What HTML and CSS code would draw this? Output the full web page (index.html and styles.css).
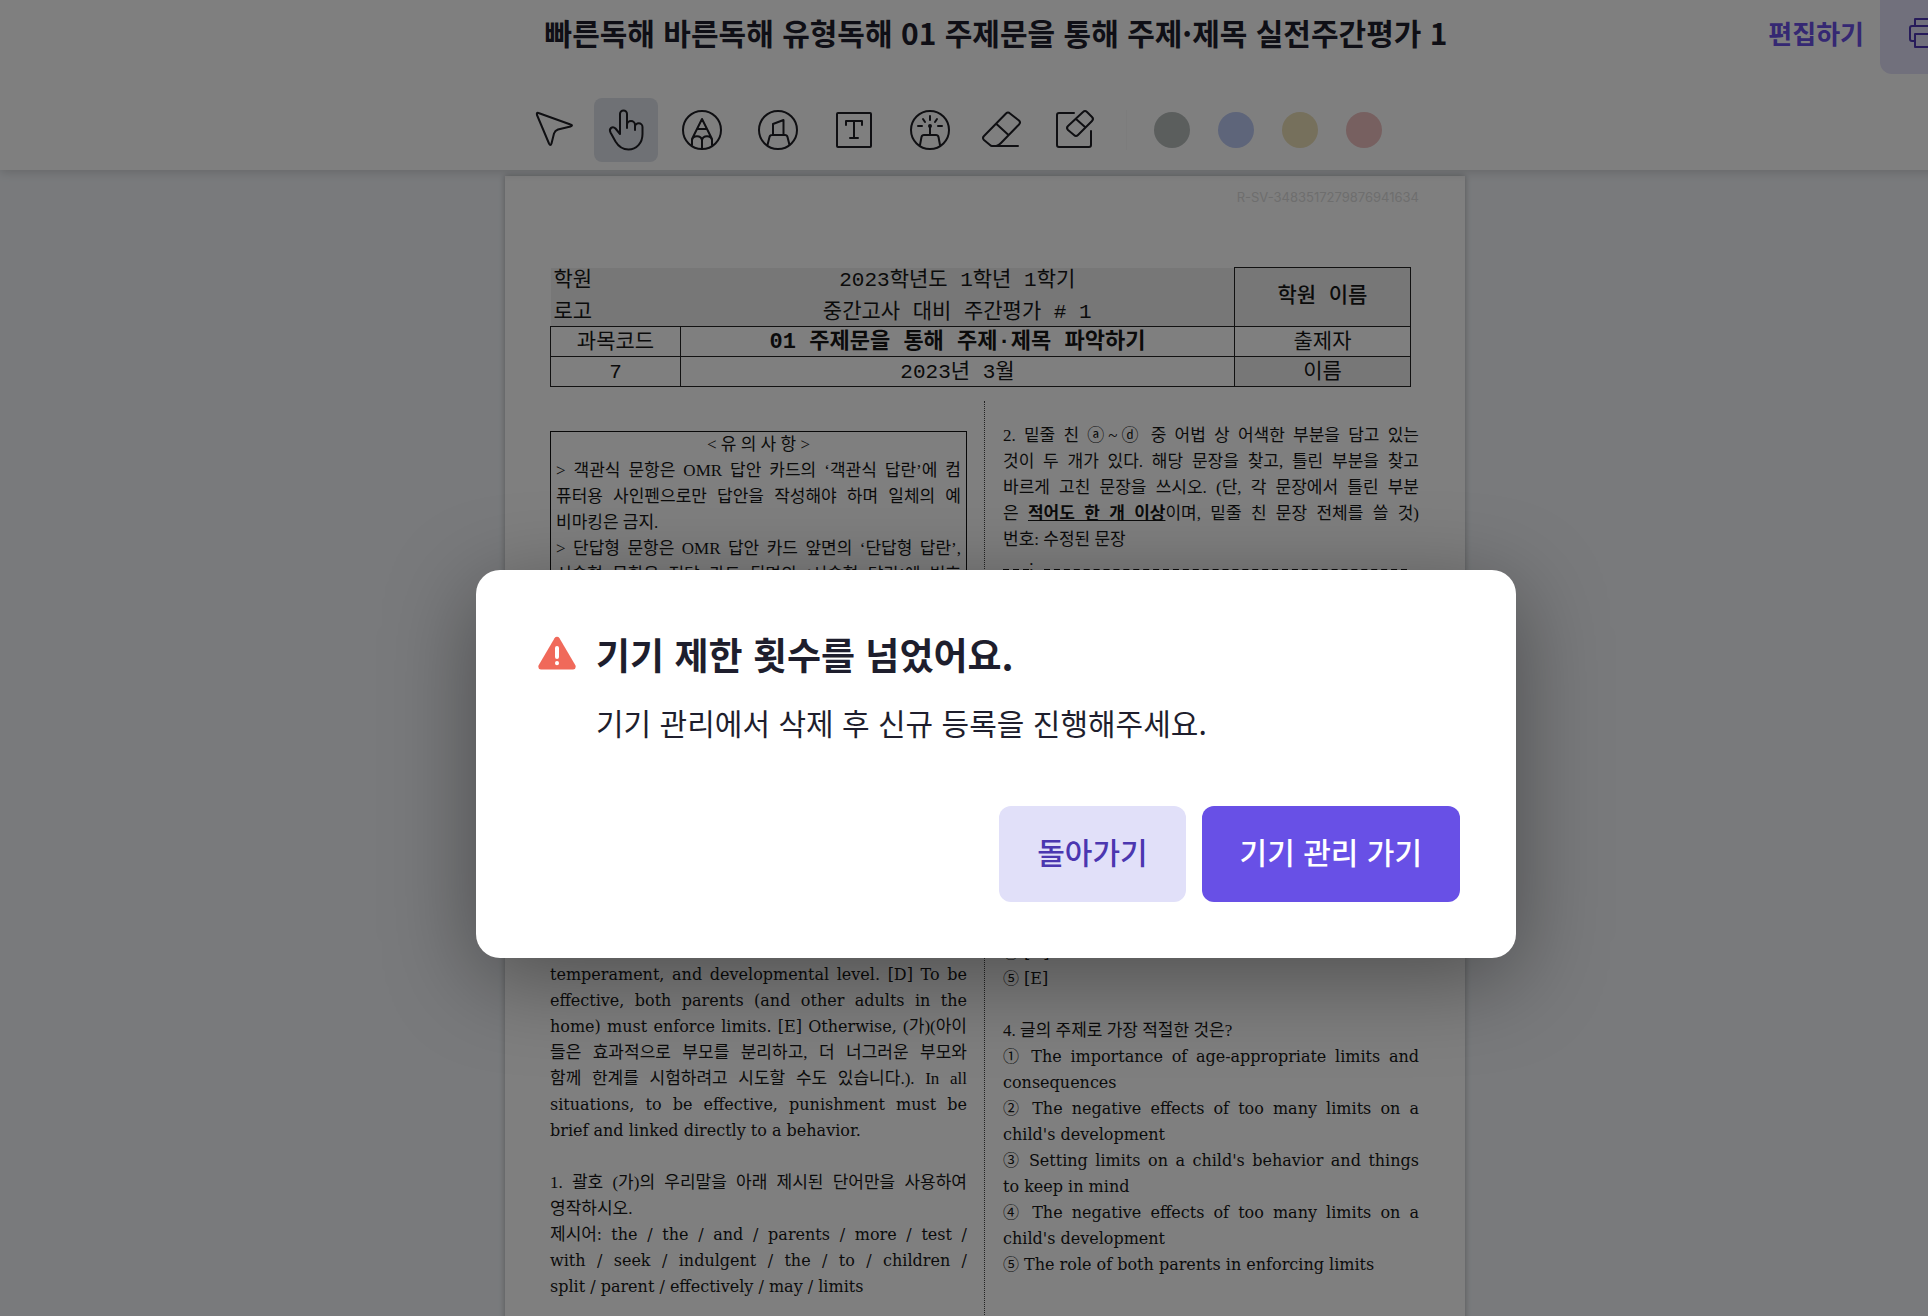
FILE: index.html
```html
<!DOCTYPE html>
<html lang="ko">
<head>
  <meta charset="UTF-8">
  <title>실전주간평가</title>
  <link rel="stylesheet" href="styles.css">
</head>
<body>

  <div class="app">
    <header class="header">
      <div class="title-row">
        <h1>빠른독해 바른독해 유형독해 01 주제문을 통해 주제·제목 실전주간평가 1</h1>
        <div class="actions">
          <a class="edit" href="#">편집하기</a>
          <button class="print" aria-label="인쇄">
            <svg width="32" height="32" viewBox="0 0 32 32">
              <path d="M7 9V2h18v7M7 24H4a2 2 0 0 1-2-2V11a2 2 0 0 1 2-2h24a2 2 0 0 1 2 2v11a2 2 0 0 1-2 2h-3M7 17h18v13H7z"/>
            </svg>
          </button>
        </div>
      </div>

      <div class="toolbar">
        <div class="tools">
          <button class="tool" aria-label="선택">
            <svg viewBox="0 0 64 64"><path d="M20.500 15l32 11.500q3 1 0 2l-12.500 3q-3 1-4 4l-2.500 10q-1 3-2.500 0L19 17q-.8-3 1.500-2z"/></svg>
          </button>
          <button class="tool active" aria-label="이동">
            <svg viewBox="0 0 64 64"><path d="M26 36V16a3.500 3.500 0 0 1 7 0v14-3a4 4 0 0 1 8 0v4-2a3.700 3.700 0 0 1 7.500 0v7c0 9-6 15.500-14 15.500-6 0-10-3-13-8l-5-9c-2-4 2-7 5-4z"/><path d="M41 27v5"/></svg>
          </button>
          <button class="tool" aria-label="연필">
            <svg viewBox="0 0 64 64"><circle cx="32" cy="32" r="19"/><path d="M22 47V41l10-20 10 20v6M27.500 31h9M22 42c1-5 9-5 10 0 1-5 9-5 10 0M32 42v9"/></svg>
          </button>
          <button class="tool" aria-label="형광펜">
            <svg viewBox="0 0 64 64"><circle cx="32" cy="32" r="19"/><path d="M27 37V26l10.500-4v15M21.500 47l2-8q.5-2 2.500-2h13q2 0 2.500 2l2 8"/></svg>
          </button>
          <button class="tool" aria-label="텍스트">
            <svg viewBox="0 0 64 64"><rect x="15" y="15" width="34" height="34" rx="1"/><path d="M24 27v-4h16v4M32 23v17M28 40h8"/></svg>
          </button>
          <button class="tool" aria-label="레이저">
            <svg viewBox="0 0 64 64"><circle cx="32" cy="32" r="19"/><path d="M22 47l1.500-8q.5-2 2.500-2h12q2 0 2.500 2l1.500 8M32 37v-9M32 18v4M25 21l2 3M39 21l-2 3M20 28h4M40 28h4"/><circle class="dot" cx="32" cy="28" r="1"/></svg>
          </button>
          <button class="tool" aria-label="지우개">
            <svg viewBox="0 0 64 64"><path d="M32 15.500q2-2 4 0l9 7q2 2 0 4L27 45q-3 3-5 3h-4q-1 0-2-1l-6-5q-2-2 0-4zM22.500 26l12 11M44 48H18"/></svg>
          </button>
          <button class="tool" aria-label="전체 지우기">
            <svg viewBox="0 0 64 64"><path d="M24 15H9q-2 0-2 2v30q0 2 2 2h30q2 0 2-2V33M33 14q2-2 4 0l5 5q2 2 0 4L28 37q-2 2-4 0l-6-5q-2-2 0-4zM26 21l9 8"/></svg>
          </button>
        </div>
        <div class="divider"></div>
        <div class="swatches">
          <button class="swatch gray" aria-label="회색"></button>
          <button class="swatch blue" aria-label="파랑"></button>
          <button class="swatch yellow" aria-label="노랑"></button>
          <button class="swatch red" aria-label="빨강"></button>
        </div>
      </div>
    </header>

    <main class="canvas">
      <article class="paper">
        <p class="serial">R-SV-3483517279876941634</p>

        <table class="exam-head">
          <colgroup><col class="c1"><col class="c2"><col class="c3"></colgroup>
          <tr class="top">
            <td class="shade left"><span>학원</span><span>로고</span></td>
            <td class="shade"><span>2023학년도 1학년 1학기</span><span>중간고사 대비 주간평가 # 1</span></td>
            <td class="shade school">학원 이름</td>
          </tr>
          <tr>
            <td>과목코드</td>
            <td class="subject">01 주제문을 통해 주제·제목 파악하기</td>
            <td>출제자</td>
          </tr>
          <tr>
            <td>7</td>
            <td>2023년 3월</td>
            <td class="shade">이름</td>
          </tr>
        </table>

        <div class="columns">
          <section class="col">
            <div class="notice">
              <h2>&lt; 유 의 사 항 &gt;</h2>
              <p class="lines">
                <span>&gt; 객관식 문항은 OMR 답안 카드의 ‘객관식 답란’에 컴</span>
                <span>퓨터용 사인펜으로만 답안을 작성해야 하며 일체의 예</span>
                <span>비마킹은 금지.</span>
              </p>
              <p class="lines cut">
                <span>&gt; 단답형 문항은 OMR 답안 카드 앞면의 ‘단답형 답란’,</span>
                <span>서술형 문항은 전답 카드 뒷면의 ‘서술형 답란’에 번호</span>
              </p>
            </div>

            <p class="lines en">
              <span class="end">age,</span>
              <span>temperament, and developmental level. [D] To be</span>
              <span>effective, both parents (and other adults in the</span>
              <span>home) must enforce limits. [E] Otherwise, <b class="ko">(가)(아이</b></span>
              <span class="ko">들은 효과적으로 부모를 분리하고, 더 너그러운 부모와</span>
              <span class="ko">함께 한계를 시험하려고 시도할 수도 있습니다.). In all</span>
              <span>situations, to be effective, punishment must be</span>
              <span>brief and linked directly to a behavior.</span>
            </p>

            <p class="lines next">
              <span>1. 괄호 (가)의 우리말을 아래 제시된 단어만을 사용하여</span>
              <span>영작하시오.</span>
            </p>
            <p class="lines en">
              <span><b class="ko">제시어:</b> the / the / and / parents / more / test /</span>
              <span>with / seek / indulgent / the / to / children /</span>
              <span>split / parent / effectively / may / limits</span>
            </p>
          </section>

          <section class="col right">
            <p class="lines">
              <span>2. 밑줄 친 ⓐ~ⓓ 중 어법 상 어색한 부분을 담고 있는</span>
              <span>것이 두 개가 있다. 해당 문장을 찾고, 틀린 부분을 찾고</span>
              <span>바르게 고친 문장을 쓰시오. (단, 각 문장에서 틀린 부분</span>
              <span>은 <u>적어도 한 개 이상</u>이며, 밑줄 친 문장 전체를 쓸 것)</span>
              <span>번호: 수정된 문장</span>
            </p>
            <div class="answer"><i class="no"></i>:<i class="sentence"></i></div>

            <p class="lines en tail">
              <span class="start">④ [D]</span>
              <span>⑤ [E]</span>
            </p>
            <p class="lines next">
              <span>4. 글의 주제로 가장 적절한 것은?</span>
            </p>
            <p class="lines en">
              <span>① The importance of age-appropriate limits and</span>
              <span>consequences</span>
            </p>
            <p class="lines en">
              <span>② The negative effects of too many limits on a</span>
              <span>child's development</span>
            </p>
            <p class="lines en">
              <span>③ Setting limits on a child's behavior and things</span>
              <span>to keep in mind</span>
            </p>
            <p class="lines en">
              <span>④ The negative effects of too many limits on a</span>
              <span>child's development</span>
            </p>
            <p class="lines en">
              <span>⑤ The role of both parents in enforcing limits</span>
            </p>
          </section>
        </div>
      </article>
    </main>

    <div class="overlay">
      <div class="modal" role="alertdialog" aria-labelledby="modal-title" aria-describedby="modal-text">
        <div class="message">
          <svg class="warning" width="38" height="34" viewBox="0 0 38 34">
            <path d="M16.500 2.200a3 3 0 0 1 5 0l16 27.300a3 3 0 0 1-2.600 4H3.100a3 3 0 0 1-2.600-4z"/>
            <path class="mark" d="M19 12v9M19 27v.2"/>
          </svg>
          <div>
            <h2 id="modal-title">기기 제한 횟수를 넘었어요.</h2>
            <p id="modal-text">기기 관리에서 삭제 후 신규 등록을 진행해주세요.</p>
          </div>
        </div>
        <div class="buttons">
          <button class="btn back">돌아가기</button>
          <button class="btn go">기기 관리 가기</button>
        </div>
      </div>
    </div>
  </div>

</body>
</html>
```

FILE: styles.css
```css
* {
  box-sizing: border-box;
}

body {
  margin: 0;
  height: 100vh;
  overflow: hidden;
  background-color: #f2f5f9;
  color: #1e1e2d;
  font-family: "Noto Sans CJK KR", sans-serif;
}

h1, h2, p {
  margin: 0;
}

button {
  border: none;
  padding: 0;
  font-family: inherit;
}

svg {
  fill: none;
  stroke: #1e1e24;
  stroke-width: 2;
  stroke-linecap: round;
  stroke-linejoin: round;
}

/* the app runs a little past the right edge of the window */
.app {
  position: relative;
  width: calc(100% + 64px);
  height: 100vh;
  overflow: hidden;
}

/* header */
.header {
  position: relative;
  height: 170px;
  background-color: #fff;
  box-shadow: 0 2px 10px rgba(0, 0, 0, 0.16);
}

.title-row {
  display: grid;
  grid-template-columns: 1fr auto 1fr;
  align-items: center;
  height: 66px;
  margin-bottom: 32px;
}

h1 {
  grid-column: 2;
  padding-bottom: 2px;
  font-size: 30px;
  line-height: 40px;
  font-weight: 700;
  white-space: nowrap;
}

.actions {
  display: flex;
  justify-content: flex-end;
  align-items: center;
  align-self: start;
  gap: 16px;
  height: 66px;
}

.edit {
  padding-bottom: 2px;
  color: #6a50e6;
  font-size: 26px;
  font-weight: 700;
  text-decoration: none;
}

.print {
  align-self: flex-start;
  width: 112px;
  height: 74px;
  padding: 1px 0 9px 28px;
  border-radius: 0 0 12px 12px;
  background-color: #e2e0f8;
  text-align: left;
}

.print svg {
  display: block;
  stroke: #4e37b4;
}

.toolbar {
  display: flex;
  justify-content: center;
  align-items: center;
  padding-right: 92px;
}

.tools {
  display: flex;
  gap: 12px;
}

.tool {
  width: 64px;
  height: 64px;
  border-radius: 8px;
  background-color: transparent;
}

.tool svg {
  display: block;
}

.tool .dot {
  fill: #1e1e24;
}

.tool.active {
  background-color: #dfe3ea;
}

.divider {
  width: 1px;
  height: 40px;
  margin: 0 27px 0 12px;
  background-color: #f8f8f8;
}

.swatches {
  display: flex;
  gap: 28px;
}

.swatch {
  width: 36px;
  height: 36px;
  border-radius: 50%;
}

.gray { background-color: #b6bcbb; }
.blue { background-color: #bccaf4; }
.yellow { background-color: #ece0b8; }
.red { background-color: #eec0c0; }

/* exam paper */
.canvas {
  padding: 6px 22px 0 0;
}

.paper {
  max-width: 960px;
  min-height: 1300px;
  margin: 0 auto;
  padding: 12px 46px 0 45px;
  background-color: #fff;
  color: #161616;
  box-shadow: 0 0 6px rgba(0, 0, 0, 0.3);
  font-family: "Liberation Serif", "Noto Sans CJK KR", serif;
}

.serial {
  margin-bottom: 61px;
  color: #dcdcdc;
  font-family: Inter, sans-serif;
  font-size: 13px;
  line-height: 18px;
  text-align: right;
}

.exam-head {
  width: 861px;
  border-collapse: collapse;
  table-layout: fixed;
  font-family: "Liberation Mono", "Noto Sans CJK KR", monospace;
  font-size: 21px;
  line-height: 26px;
  text-align: center;
}

.c1 { width: 130px; }
.c3 { width: 176px; }

.exam-head td {
  height: 30px;
  padding: 3px 0 0;
  border: 1px solid #222;
}

.exam-head .top td {
  height: 58px;
  padding: 0;
  border-top: none;
  border-left: none;
  border-right: none;
}

.exam-head .top .school {
  border: 1px solid #222;
  font-weight: 500;
}

.exam-head span {
  display: block;
}

.exam-head span + span {
  margin-top: 6px;
}

.exam-head .top .left {
  padding-left: 3px;
  text-align: left;
}

.exam-head .shade {
  background-color: #eee;
}

.exam-head .subject {
  font-size: 22px;
  font-weight: 700;
}

.columns {
  display: grid;
  grid-template-columns: 434px 1fr;
  min-height: 1000px;
  margin-top: 14px;
}

.col {
  padding: 30px 17px 0 0;
}

.col.right {
  padding: 22px 0 0 18px;
  border-left: 1px dotted #444;
}

.notice {
  min-height: 480px;
  margin-bottom: 25px;
  padding: 0 5px;
  border: 1px solid #111;
}

.notice h2 {
  font-size: 17px;
  font-weight: 400;
  line-height: 26px;
  text-align: center;
}

/* every line fills the column but the last one */
.lines {
  font-size: 17px;
  line-height: 26px;
}

.lines > span {
  display: block;
  height: 26px;
  text-align: justify;
  text-align-last: justify;
  white-space: nowrap;
}

.lines > span:last-child,
.lines > .start {
  text-align-last: left;
}

.lines.cut > span:last-child {
  text-align-last: justify;
}

.lines > .end {
  text-align-last: right;
}

.lines.en {
  font-family: "DejaVu Serif", "Noto Sans CJK KR", serif;
  font-size: 16px;
}

.lines .ko {
  font-family: "Liberation Serif", "Noto Sans CJK KR", serif;
  font-size: 17px;
  font-weight: 400;
}

.lines u {
  font-weight: 700;
}

.next {
  margin-top: 26px;
}

.answer {
  display: flex;
  height: 18px;
  font-size: 17px;
  line-height: 26px;
}

.answer i {
  border-bottom: 2px dashed #161616;
}

.answer .no {
  width: 26px;
}

.answer .sentence {
  flex: 1;
  margin: 0 12px 0 10px;
}

.tail {
  margin-top: 369px;
}

/* dialog */
.overlay {
  position: absolute;
  inset: 0;
  display: flex;
  justify-content: center;
  align-items: flex-start;
  padding-top: 570px;
  background-color: rgba(0, 0, 0, 0.5);
}

.modal {
  width: 1040px;
  padding: 56px;
  border-radius: 24px;
  background-color: #fff;
  box-shadow: 0 20px 90px rgba(0, 0, 0, 0.38);
}

.message {
  display: flex;
  gap: 20px;
  padding-left: 6px;
}

.warning {
  margin-top: 10px;
  fill: #f0695a;
  stroke: none;
}

.warning .mark {
  stroke: #fff;
  stroke-width: 4;
}

.message h2 {
  margin-bottom: 16px;
  font-size: 37px;
  font-weight: 700;
  line-height: 56px;
}

.message p {
  font-size: 30px;
  line-height: 48px;
}

.buttons {
  display: flex;
  justify-content: flex-end;
  gap: 16px;
  margin-top: 60px;
}

.btn {
  height: 96px;
  padding: 0 38px 6px;
  border-radius: 12px;
  font-size: 30px;
  font-weight: 500;
}

.back {
  background-color: #e1e0f9;
  color: #4b37b0;
}

.go {
  background-color: #6850e6;
  color: #fff;
}
```
